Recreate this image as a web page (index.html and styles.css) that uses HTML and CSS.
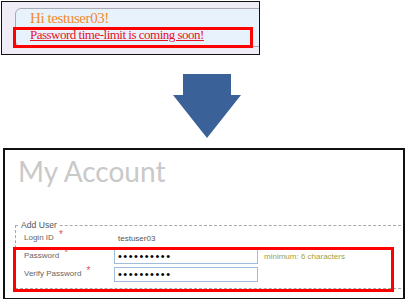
FILE: index.html
```html
<!DOCTYPE html>
<html lang="en">
  <head>
    <meta charset="UTF-8" />
    <title>Password time-limit</title>
    <link rel="stylesheet" href="styles.css">
  </head>
  <body>
    <div class="notice">
      <div class="notice-box">
        <div class="greeting">Hi testuser03!</div>
        <a class="warning" href="#">Password time-limit is coming soon!</a>
      </div>
      <div class="highlight highlight-top"></div>
    </div>

    <svg class="arrow" width="68" height="64" viewBox="0 0 68 64">
      <polygon points="10,0 58,0 58,21 68,21 34,64 0,21 10,21" fill="#3b6298" />
    </svg>

    <div class="account">
      <h1 class="title">My Account</h1>
      <fieldset class="form-box">
        <legend>Add User</legend>
        <div class="form-grid">
          <div class="label">Login ID <span class="req">*</span></div>
          <div class="value">testuser03</div>
          <div></div>

          <div class="label">Password <span class="req">*</span></div>
          <input class="field" type="password" value="abcdefghij" />
          <div class="hint">minimum: 6 characters</div>

          <div class="label">Verify Password <span class="req">*</span></div>
          <input class="field" type="password" value="abcdefghij" />
          <div></div>
        </div>
      </fieldset>
      <div class="highlight highlight-bottom"></div>
    </div>
  </body>
</html>
```

FILE: styles.css
```css
body {
  margin: 0;
  padding: 0;
  background-color: #fff;
  font-family: "Liberation Sans", Arial, sans-serif;
}
.notice {
  position: relative;
  box-sizing: border-box;
  width: 259px;
  height: 54px;
  margin: 1px 0 0 1px;
  border: 1px solid #111;
  background-color: #efecf6;
  overflow: hidden;
}
.notice-box {
  width: 300px;
  height: 39px;
  box-sizing: border-box;
  margin: 6px 0 0 13px;
  padding: 1px 0 0 14px;
  border: 1px solid #a9a9b3;
  border-radius: 6px;
  background-color: #e8f2fc;
  font-family: "Liberation Serif", "Times New Roman", serif;
  line-height: 16px;
}
.greeting {
  color: #f2892e;
  font-size: 15px;
  letter-spacing: -0.4px;
}
.warning {
  color: #e8101f;
  font-size: 13px;
  letter-spacing: -0.5px;
  text-decoration: underline;
}
.highlight {
  position: absolute;
  border: 3px solid #f00;
  box-sizing: border-box;
}
.highlight-top {
  left: 11px;
  top: 25px;
  width: 240px;
  height: 21px;
}
.arrow {
  display: block;
  margin: 19px 0 0 173px;
}
.account {
  position: relative;
  box-sizing: border-box;
  width: 402px;
  height: 151px;
  margin: 10px 0 0 3px;
  padding: 0 0 0 10px;
  border: 2px solid #111;
  border-bottom-width: 1px;
  overflow: hidden;
}
.title {
  margin: 4px 0 0 3px;
  font-family: Lato, "Open Sans", sans-serif;
  font-size: 28px;
  font-weight: 400;
  line-height: 35px;
  color: #c9c9c9;
}
.form-box {
  margin: 31px -3px 0 0;
  padding: 0 0 6px 8px;
  border: 1px dashed #a8a8a8;
  font-size: 8px;
}
.form-box legend {
  margin-left: -5px;
  padding: 0 2px;
  font-size: 8.6px;
  line-height: 10px;
  color: #555;
}
.form-grid {
  display: grid;
  grid-template-columns: 90px 150px 1fr;
  grid-auto-rows: 16px;
  row-gap: 2px;
  align-items: center;
}
.label {
  color: #666;
  line-height: 10px;
}
.req {
  position: relative;
  top: -2px;
  margin-left: 3px;
  color: #e0506a;
  font-size: 10px;
  line-height: 0;
}
.value {
  padding-left: 4px;
  color: #555;
}
.field {
  box-sizing: border-box;
  width: 144px;
  height: 15px;
  margin: 0;
  padding: 0 3px;
  border: 1px solid #9fbde0;
  font-size: 11px;
  letter-spacing: 1.5px;
  color: #000;
}
.hint {
  color: #a3a23a;
}
.highlight-bottom {
  left: 8px;
  top: 97px;
  width: 381px;
  height: 45px;
}
```
